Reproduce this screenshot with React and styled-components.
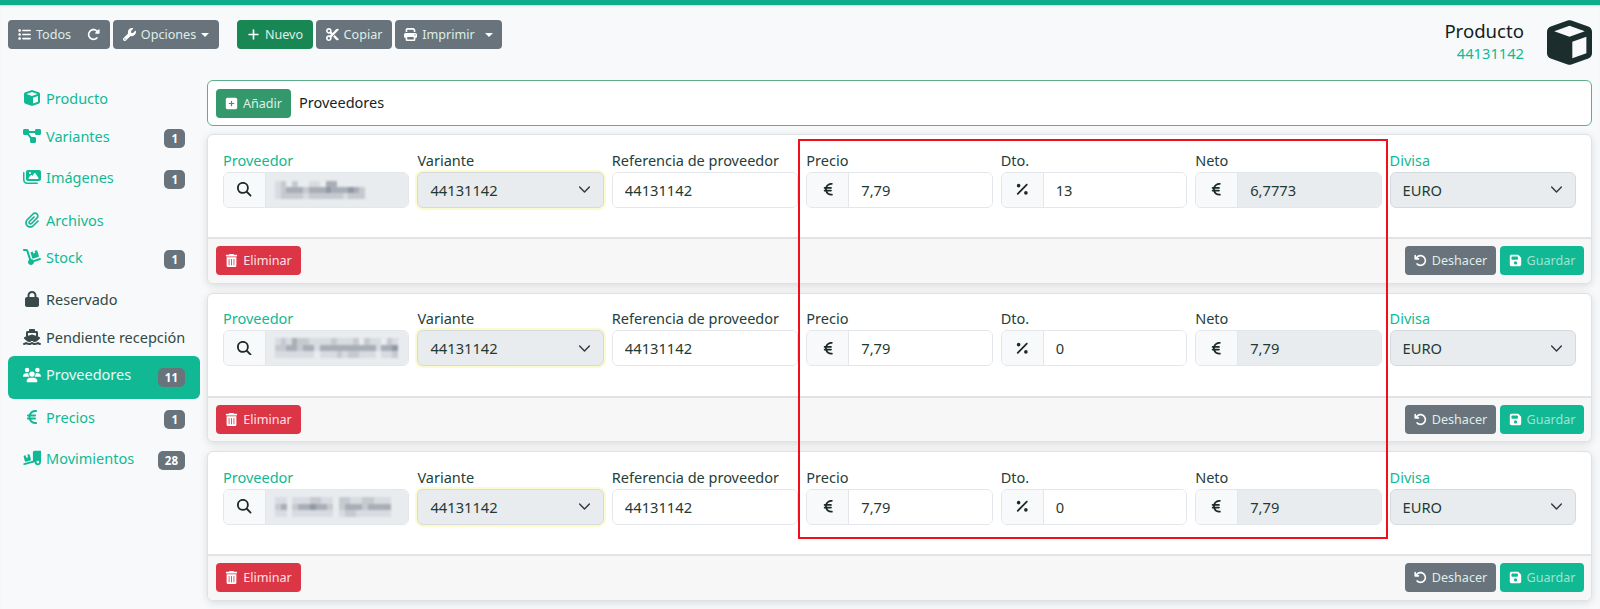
import React from 'react';
import styled, { createGlobalStyle } from 'styled-components';
import {
  FaList, FaRotateRight, FaWrench, FaPlus, FaScissors, FaPrint, FaCube, FaDiagramProject, FaImages,
  FaPaperclip, FaDolly, FaLock, FaShip, FaUsers, FaEuroSign, FaTruckRampBox, FaSquarePlus,
  FaTrashCan, FaMagnifyingGlass, FaPercent, FaArrowRotateLeft, FaFloppyDisk,
} from 'react-icons/fa6';

const teal = '#10b994';
const ink = '#1a2e2b';
const chevron = "url(\"data:image/svg+xml,%3csvg xmlns='http://www.w3.org/2000/svg' viewBox='0 0 16 16'%3e%3cpath fill='none' stroke='%23343a40' stroke-linecap='round' stroke-linejoin='round' stroke-width='1.8' d='m2 5 6 6 6-6'/%3e%3c/svg%3e\")";

const GlobalStyle = createGlobalStyle`
  html, body { margin: 0; padding: 0; height: 100%; overflow: hidden; }
  body {
    background: #f8f9fb;
    color: ${ink};
    font-family: "Noto Sans", "Open Sans", sans-serif;
    font-size: 15px;
  }
`;

const Page = styled.div`
  position: relative;
  height: 609px;
  overflow: hidden;
  border-top: 5px solid #0dac8c;
  box-shadow: inset 0 2px 2px -1px rgba(0, 0, 0, 0.15);
`;

const TopBar = styled.header`
  display: flex;
  justify-content: space-between;
  height: 75px;
  padding: 15px 8px 0;
  box-sizing: border-box;
`;

const Toolbar = styled.div`
  display: flex;
  align-items: flex-start;
  gap: 3px;
`;

const Spacer = styled.div`
  width: 12px;
`;

const Push = styled.span`
  flex: 1;
`;

const Button = styled.button`
  display: inline-flex;
  align-items: center;
  justify-content: center;
  gap: 5px;
  box-sizing: border-box;
  width: ${(p) => p.$w}px;
  height: 29px;
  padding: 0 10px;
  border: 0;
  border-radius: 4px;
  background: ${(p) => p.$bg || '#68737b'};
  color: ${(p) => p.$fg || '#dfeeea'};
  font-family: inherit;
  font-size: 12.6px;
  white-space: nowrap;
  svg { flex: none; font-size: 13px; color: #fff; }
`;

const Caret = styled.span`
  width: 0;
  height: 0;
  border-left: 4px solid transparent;
  border-right: 4px solid transparent;
  border-top: 4px solid #fff;
`;

const Title = styled.div`
  display: flex;
  align-items: flex-start;
  gap: 23px;
`;

const TitleText = styled.div`
  text-align: right;
  font-size: 18.6px;
  line-height: 25px;
  margin-top: -2px;
  color: #111f1d;
  small {
    display: block;
    color: ${teal};
    font-size: 14.7px;
    line-height: 20px;
  }
`;

const Layout = styled.div`
  display: flex;
  gap: 7px;
  padding: 0 8px;
`;

const Sidebar = styled.nav`
  flex: none;
  width: 192px;
  display: flex;
  flex-direction: column;
`;

const NavItem = styled.div`
  display: flex;
  align-items: center;
  gap: 5px;
  box-sizing: border-box;
  height: ${(p) => p.$h}px;
  margin-top: ${(p) => p.$active ? 8 : 0}px;
  padding: 0 15px;
  border-radius: 6px;
  font-size: 14.5px;
  color: ${(p) => p.$active ? '#e9f8f4' : p.$dark ? '#2f4a45' : teal};
  background: ${(p) => p.$active ? teal : 'transparent'};
  svg {
    flex: none;
    width: 18px;
    height: 16px;
    margin-bottom: ${(p) => p.$active ? 6 : 0}px;
    color: ${(p) => p.$active ? '#fff' : p.$dark ? '#3a4a4a' : teal};
  }
`;

const NavLabel = styled.span`
  flex: 1;
  white-space: nowrap;
  margin-bottom: ${(p) => p.$up || 0}px;
`;

const Badge = styled.span`
  flex: none;
  height: 19px;
  padding: 0 7px;
  margin-top: ${(p) => p.$active ? 0 : 5}px;
  box-sizing: border-box;
  border-radius: 5px;
  background: #68737b;
  color: #fff;
  font-size: 11.5px;
  font-weight: 700;
  line-height: 19px;
  text-align: center;
`;

const Main = styled.main`
  flex: 1;
  display: flex;
  flex-direction: column;
  gap: 9px;
`;

const AddPanel = styled.div`
  display: flex;
  align-items: center;
  gap: 8px;
  height: 46px;
  margin-bottom: -1px;
  padding: 0 8px;
  box-sizing: border-box;
  border: 1px solid #5fae8b;
  border-radius: 6px;
  background: #fff;
  font-size: 14.5px;
  color: #14241f;
`;

const PanelTitle = styled.span`
  margin-bottom: 2px;
`;

const Card = styled.section`
  display: flex;
  flex-direction: column;
  height: 149.5px;
  box-sizing: border-box;
  border: 1px solid #dfe1e3;
  border-radius: 6px;
  background: #fff;
  box-shadow: 0 2px 8px rgba(0, 0, 0, 0.12);
`;

const Fields = styled.div`
  flex: 1;
  display: grid;
  grid-template-columns: repeat(7, 1fr);
  gap: 8px;
  padding: 13.5px 15px 0;
`;

const Field = styled.div`
  display: flex;
  flex-direction: column;
  min-width: 0;
`;

const Label = styled.label`
  height: 23px;
  font-size: 14.5px;
  line-height: 22px;
  white-space: nowrap;
  color: ${(p) => p.$accent ? teal : '#234039'};
`;

const Group = styled.div`
  display: flex;
  height: 36px;
  box-sizing: border-box;
  border: 1px solid #e3e6ea;
  border-radius: 6px;
  overflow: hidden;
  background: #fff;
`;

const Addon = styled.span`
  flex: none;
  display: flex;
  align-items: center;
  justify-content: center;
  width: 41px;
  border-right: 1px solid #e3e6ea;
  background: #f8f9fa;
  color: #1d2a2a;
  font-size: 14.5px;
`;

const Input = styled.input`
  flex: 1;
  min-width: 0;
  padding: 0 12px;
  border: 0;
  outline: 0;
  font-family: inherit;
  font-size: 14.7px;
  color: #1f3a34;
  background: ${(p) => p.$filled ? '#e9ecef' : '#fff'};
`;

const MaskBox = styled.div`
  flex: 1;
  display: flex;
  align-items: center;
  padding-left: 9px;
  background: #e9ecef;
`;

const MaskArt = styled.svg`
  filter: blur(0.9px);
`;

const Select = styled.select`
  appearance: none;
  height: 36px;
  width: 100%;
  padding: 0 12px;
  border: 1px solid #d6dadf;
  border-radius: 6px;
  outline: 0;
  font-family: inherit;
  font-size: 14.7px;
  color: #1f3a34;
  background: #e9ecef ${chevron} no-repeat right 12px center / 13px 13px;
  box-shadow: ${(p) => p.$glow ? '0 0 0 2px #fbfbd0' : 'none'};
`;

const Footer = styled.footer`
  display: flex;
  justify-content: space-between;
  align-items: center;
  height: 45.5px;
  padding: 0 7px 0 8px;
  box-sizing: border-box;
  border-top: 2px solid #e2e3e4;
  border-radius: 0 0 6px 6px;
  background: #f7f7f7;
`;

const Actions = styled.div`
  display: flex;
  gap: 4px;
`;

const RedBox = styled.div`
  position: absolute;
  left: 798px;
  top: 134px;
  width: 590px;
  height: 400px;
  box-sizing: border-box;
  border: 2px solid #f0101c;
  pointer-events: none;
`;

const tones = ['#e9ecef', '#d8dbe0', '#c6cad0', '#a9aeb6', '#8f98a6'];

// pixelated provider names: three rows of mosaic tones, one digit per cell
const Mask = ({ rows, width, height }) => (
  <MaskArt
    width={width}
    height={height}
    viewBox={`0 0 ${rows[0].length} 3`}
    preserveAspectRatio="none"
    shapeRendering="crispEdges"
  >
    {rows.map((row, y) => [...row].map((n, x) => (
      <rect key={`${x}-${y}`} x={x} y={y} width="1" height="1" fill={tones[+n]} />
    )))}
  </MaskArt>
);

const masks = [
  { width: 90, height: 18, rows: ['1202001103300000', '1233323334333432', '1222212222221222'] },
  { width: 123, height: 20, rows: ['1213221111211120211021', '2233233133333333331334', '1111111011121221110112'] },
  { width: 116, height: 20, rows: ['11011122110221122111', '23023343320233323333', '11011111110122111111'] },
];

const navItems = [
  { icon: <FaCube />, label: 'Producto', h: 36 },
  { icon: <FaDiagramProject />, label: 'Variantes', h: 40, badge: 1 },
  { icon: <FaImages />, label: 'Imágenes', h: 42, badge: 1 },
  { icon: <FaPaperclip />, label: 'Archivos', h: 44 },
  { icon: <FaDolly />, label: 'Stock', h: 30, badge: 1 },
  { icon: <FaLock />, label: 'Reservado', h: 54, dark: true },
  { icon: <FaShip />, label: 'Pendiente recepción', h: 22, dark: true },
  { icon: <FaUsers />, label: 'Proveedores', h: 43, badge: 11, active: true },
  { icon: <FaEuroSign />, label: 'Precios', h: 36, badge: 1 },
  { icon: <FaTruckRampBox />, label: 'Movimientos', h: 46, badge: 28 },
];

const suppliers = [
  { id: 1, price: '7,79', dto: '13', net: '6,7773' },
  { id: 2, price: '7,79', dto: '0', net: '7,79' },
  { id: 3, price: '7,79', dto: '0', net: '7,79' },
];

export default function App() {
  return (
    <Page>
      <GlobalStyle />
      <TopBar>
        <Toolbar>
          <Button $w={102}><FaList /><span>Todos</span><Push /><FaRotateRight /></Button>
          <Button $w={106}><FaWrench /><span>Opciones</span><Caret /></Button>
          <Spacer />
          <Button $w={76} $bg="#198754"><FaPlus /><span>Nuevo</span></Button>
          <Button $w={76}><FaScissors /><span>Copiar</span></Button>
          <Button $w={107}><FaPrint /><span>Imprimir</span><Push /><Caret /></Button>
        </Toolbar>
        <Title>
          <TitleText>Producto<small>44131142</small></TitleText>
          <FaCube size={45} color="#1b2d2c" />
        </Title>
      </TopBar>
      <Layout>
        <Sidebar>
          {navItems.map((item) => (
            <NavItem key={item.label} $h={item.h} $active={item.active} $dark={item.dark}>
              {item.icon}
              <NavLabel $up={item.active ? 7 : 0}>{item.label}</NavLabel>
              {item.badge && <Badge $active={item.active}>{item.badge}</Badge>}
            </NavItem>
          ))}
        </Sidebar>
        <Main>
          <AddPanel>
            <Button $w={75} $bg="#33986b"><FaSquarePlus /><span>Añadir</span></Button>
            <PanelTitle>Proveedores</PanelTitle>
          </AddPanel>
          {suppliers.map((s, i) => (
            <Card key={s.id}>
              <Fields>
                <Field>
                  <Label $accent>Proveedor</Label>
                  <Group>
                    <Addon><FaMagnifyingGlass /></Addon>
                    <MaskBox><Mask {...masks[i]} /></MaskBox>
                  </Group>
                </Field>
                <Field>
                  <Label>Variante</Label>
                  <Select $glow defaultValue="44131142"><option>44131142</option></Select>
                </Field>
                <Field>
                  <Label>Referencia de proveedor</Label>
                  <Group><Input readOnly value="44131142" /></Group>
                </Field>
                <Field>
                  <Label>Precio</Label>
                  <Group><Addon><FaEuroSign /></Addon><Input readOnly value={s.price} /></Group>
                </Field>
                <Field>
                  <Label>Dto.</Label>
                  <Group><Addon><FaPercent /></Addon><Input readOnly value={s.dto} /></Group>
                </Field>
                <Field>
                  <Label>Neto</Label>
                  <Group><Addon><FaEuroSign /></Addon><Input $filled readOnly value={s.net} /></Group>
                </Field>
                <Field>
                  <Label $accent>Divisa</Label>
                  <Select defaultValue="EURO"><option>EURO</option></Select>
                </Field>
              </Fields>
              <Footer>
                <Button $w={85} $bg="#dc3545" $fg="#fbe3e5"><FaTrashCan /><span>Eliminar</span></Button>
                <Actions>
                  <Button $w={91}><FaArrowRotateLeft /><span>Deshacer</span></Button>
                  <Button $w={84} $bg={teal} $fg="#9fe3d2"><FaFloppyDisk /><span>Guardar</span></Button>
                </Actions>
              </Footer>
            </Card>
          ))}
        </Main>
      </Layout>
      <RedBox />
    </Page>
  );
}
